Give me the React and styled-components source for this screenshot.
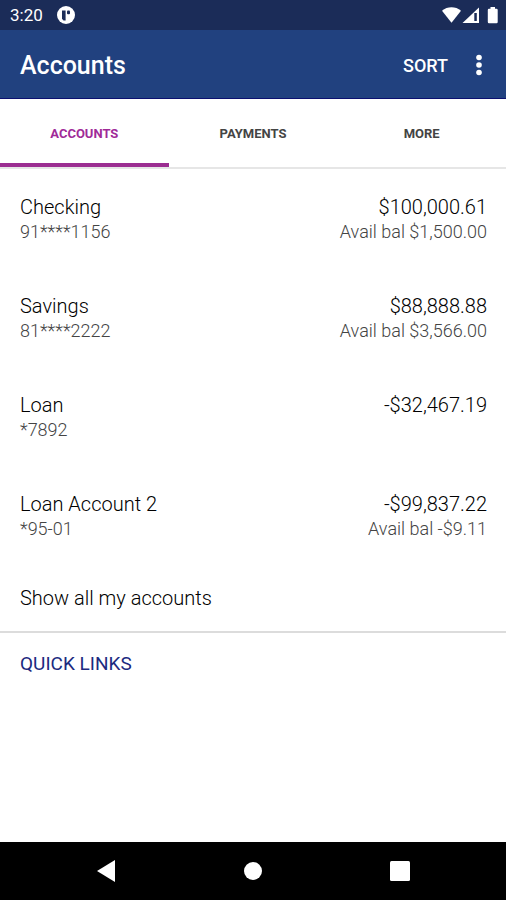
import React, { useState } from "react";
import styled, { createGlobalStyle } from "styled-components";

const GlobalStyle = createGlobalStyle`
  * {
    box-sizing: border-box;
  }

  body {
    margin: 0;
    background: #ffffff;
    font-family: Roboto, "Liberation Sans", sans-serif;
  }

  button {
    padding: 0;
    border: none;
    background: none;
    color: inherit;
    font-family: inherit;
    cursor: pointer;
  }
`;

const Screen = styled.div`
  display: flex;
  flex-direction: column;
  min-height: 100vh;
`;

const StatusBar = styled.div`
  display: flex;
  justify-content: space-between;
  align-items: center;
  height: 30px;
  padding: 0 8px 0 10px;
  background: #1b2c58;
  color: #ffffff;
  font-size: 17px;
`;

const StatusGroup = styled.div`
  display: flex;
  align-items: center;
  gap: 14px;
`;

const AppBar = styled.header`
  display: flex;
  align-items: center;
  height: 69px;
  padding: 2px 16px 0 20px;
  border-bottom: 1px solid #0c1070;
  background: #21417f;
  color: #ffffff;
`;

const Title = styled.h1`
  flex: 1;
  margin: 0;
  font-size: 25px;
  font-weight: 500;
`;

const SortButton = styled.button`
  font-size: 18px;
  font-weight: 500;
`;

const MenuButton = styled.button`
  display: flex;
  justify-content: center;
  width: 22px;
  margin-left: 20px;
`;

const Tabs = styled.nav`
  display: flex;
  height: 70px;
  border-bottom: 2px solid #e6e6e6;
`;

const Tab = styled.button`
  flex: 1;
  padding-top: 4px;
  border-bottom: 4px solid ${(props) => (props.$active ? "#9b2d91" : "transparent")};
  color: ${(props) => (props.$active ? "#a02a98" : "#444444")};
  font-size: 13px;
  font-weight: 700;
`;

const Content = styled.main`
  flex: 1;
`;

const AccountList = styled.ul`
  margin: 0;
  padding: 0;
  list-style: none;
`;

const AccountRow = styled.li`
  display: flex;
  justify-content: space-between;
  height: 99px;
  padding: 26px 19px 0 20px;
`;

const Column = styled.div`
  text-align: ${(props) => props.$align || "left"};
`;

const Primary = styled.div`
  color: #000000;
  font-size: 20px;
  font-weight: 300;
  line-height: 25px;
`;

const Secondary = styled.div`
  color: #444444;
  font-size: 18px;
  font-weight: 300;
  line-height: 24px;
`;

const ShowAll = styled.button`
  display: block;
  width: 100%;
  height: 68px;
  padding: 0 20px;
  border-bottom: 2px solid #dcdcdc;
  color: #000000;
  font-size: 20px;
  font-weight: 300;
  text-align: left;
`;

const QuickLinks = styled.h2`
  margin: 0;
  padding: 18px 20px;
  color: #1c2a80;
  font-size: 19px;
  font-weight: 400;
  line-height: 25px;
`;

const SystemNav = styled.footer`
  display: flex;
  height: 58px;
  padding: 0 33px;
  background: #000000;
`;

const NavButton = styled.button`
  display: flex;
  flex: 1;
  justify-content: center;
  align-items: center;
`;

const accounts = [
  { name: "Checking", number: "91****1156", balance: "$100,000.61", available: "$1,500.00" },
  { name: "Savings", number: "81****2222", balance: "$88,888.88", available: "$3,566.00" },
  { name: "Loan", number: "*7892", balance: "-$32,467.19" },
  { name: "Loan Account 2", number: "*95-01", balance: "-$99,837.22", available: "-$9.11" },
];

const tabs = ["ACCOUNTS", "PAYMENTS", "MORE"];

const NotificationIcon = () => (
  <svg width="18" height="18" viewBox="0 0 18 18">
    <circle cx="9" cy="9" r="9" fill="#ffffff" />
    <path d="M5 4.500h3.600v10H6.500L5 12.800z" fill="#1b2c58" />
    <rect x="10" y="4.500" width="3" height="3.800" rx="1" fill="#1b2c58" />
  </svg>
);

const SignalIcons = () => (
  <svg width="56" height="18" viewBox="0 0 56 18" fill="#ffffff">
    <path d="M0 4.700C5.500.2 13.500.2 19 4.700L9.500 16.800z" />
    <path d="M37 1.500V17H20.500z" />
    <path d="M32.300 7h2.500v8h-2.500z" fill="#1b2c58" />
    <path d="M48.500 1h4.500v1.800h1.500a1.200 1.200 0 0 1 1.200 1.200v12a1.200 1.200 0 0 1-1.200 1.200H47a1.200 1.200 0 0 1-1.200-1.200V4A1.200 1.200 0 0 1 47 2.800h1.500z" />
  </svg>
);

const App = () => {
  const [activeTab, setActiveTab] = useState("ACCOUNTS");

  return (
    <Screen>
      <GlobalStyle />
      <StatusBar>
        <StatusGroup>
          <span>3:20</span>
          <NotificationIcon />
        </StatusGroup>
        <SignalIcons />
      </StatusBar>

      <AppBar>
        <Title>Accounts</Title>
        <SortButton type="button">SORT</SortButton>
        <MenuButton type="button" aria-label="More options">
          <svg width="6" height="22" viewBox="0 0 6 22" fill="#ffffff">
            <circle cx="3" cy="3.500" r="2.800" />
            <circle cx="3" cy="11" r="2.800" />
            <circle cx="3" cy="18.500" r="2.800" />
          </svg>
        </MenuButton>
      </AppBar>

      <Tabs>
        {tabs.map((tab) => (
          <Tab
            key={tab}
            type="button"
            $active={tab === activeTab}
            onClick={() => setActiveTab(tab)}
          >
            {tab}
          </Tab>
        ))}
      </Tabs>

      <Content>
        <AccountList>
          {accounts.map((account) => (
            <AccountRow key={account.name}>
              <Column>
                <Primary>{account.name}</Primary>
                <Secondary>{account.number}</Secondary>
              </Column>
              <Column $align="right">
                <Primary>{account.balance}</Primary>
                {account.available && <Secondary>Avail bal {account.available}</Secondary>}
              </Column>
            </AccountRow>
          ))}
        </AccountList>
        <ShowAll type="button">Show all my accounts</ShowAll>
        <QuickLinks>QUICK LINKS</QuickLinks>
      </Content>

      <SystemNav>
        <NavButton type="button" aria-label="Back">
          <svg width="18" height="22" viewBox="0 0 18 22">
            <path d="M18 0v22L0 11z" fill="#ffffff" />
          </svg>
        </NavButton>
        <NavButton type="button" aria-label="Home">
          <svg width="18" height="18" viewBox="0 0 18 18">
            <circle cx="9" cy="9" r="9" fill="#ffffff" />
          </svg>
        </NavButton>
        <NavButton type="button" aria-label="Recent apps">
          <svg width="20" height="20" viewBox="0 0 20 20">
            <rect width="20" height="20" rx="1.500" fill="#ffffff" />
          </svg>
        </NavButton>
      </SystemNav>
    </Screen>
  );
};

export default App;
